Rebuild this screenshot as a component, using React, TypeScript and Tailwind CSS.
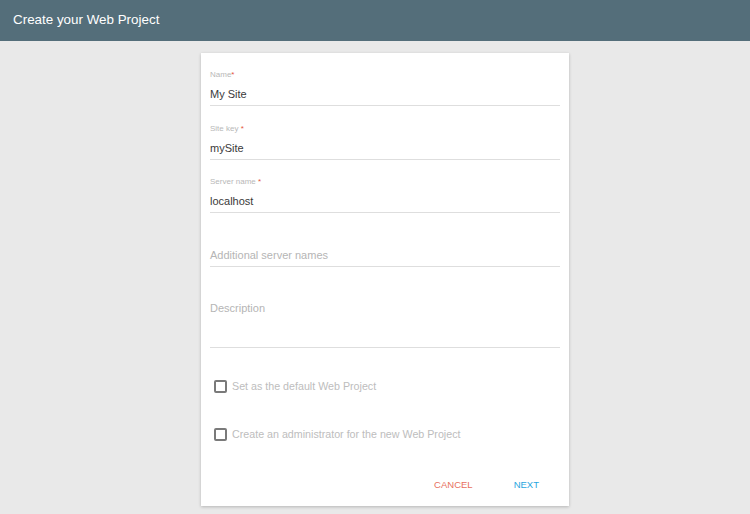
import React from "react";

const font = { fontFamily: '"Liberation Sans", Arial, sans-serif' };

function Field({ label, value, placeholder }: { label?: string; value?: string; placeholder?: string }) {
  return (
    <div className="border-b border-[#dedede] pb-[3px]">
      <div className="h-[10px] text-[8px] leading-[10px] text-[#b8b8b8]">
        {label ? (
          <>
            {label}
            <span className="text-[#e5533d]">*</span>
          </>
        ) : null}
      </div>
      <div className="mt-[6px] h-[16px] text-[11px] leading-[16px]">
        {value ? <span className="text-[#3a3a3a]">{value}</span> : <span className="text-[#b5b5b5]">{placeholder}</span>}
      </div>
    </div>
  );
}

function Check({ label }: { label: string }) {
  return (
    <div className="flex items-center pl-[4px]">
      <div className="h-[13px] w-[13px] rounded-[2px] border-2 border-[#7a7a7a]" />
      <span className="ml-[5px] text-[10.7px] leading-[13px] text-[#bdbdbd]">{label}</span>
    </div>
  );
}

export default function App() {
  return (
    <div className="min-h-[514px] bg-[#e9e9e9]" style={font}>
      <div className="flex h-[41px] items-center bg-[#546e7a] px-[13px] text-[13.4px] text-white">
        Create your Web Project
      </div>
      <div className="flex justify-center pl-[20px] pt-[12px]">
        <div className="w-[368px] bg-white px-[9px] pt-[17px] pb-[8.5px] shadow-[0_1px_3px_rgba(0,0,0,0.22)]">
          <Field label="Name" value="My Site" />
          <div className="mt-[17.5px]">
            <Field label="Site key " value="mySite" />
          </div>
          <div className="mt-[17.5px]">
            <Field label="Server name " value="localhost" />
          </div>
          <div className="mt-[17.5px]">
            <Field placeholder="Additional server names" />
          </div>
          <div className="mt-[17.5px] border-b border-[#dedede] pb-[3px]">
            <div className="h-[10px]" />
            <div className="mt-[6px] h-[44px] text-[11px] leading-[16px] text-[#b5b5b5]">Description</div>
          </div>
          <div className="mt-[32px]">
            <Check label="Set as the default Web Project" />
          </div>
          <div className="mt-[35px]">
            <Check label="Create an administrator for the new Web Project" />
          </div>
          <div className="mt-[32px] flex h-[24px] items-center justify-end gap-[41px] pr-[21px]">
            <button className="text-[9.5px] uppercase text-[#e8705e]">Cancel</button>
            <button className="text-[9.5px] uppercase text-[#29a6e0]">Next</button>
          </div>
        </div>
      </div>
    </div>
  );
}
